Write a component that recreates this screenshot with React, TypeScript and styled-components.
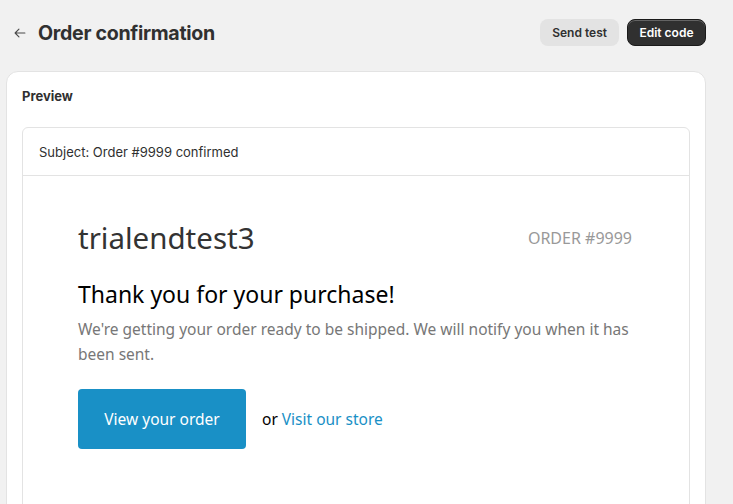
import React from "react";
import styled, { createGlobalStyle } from "styled-components";

const GlobalStyle = createGlobalStyle`
  html, body {
    margin: 0;
    padding: 0;
    background: #f1f1f1;
    font-family: Inter, "Noto Sans", sans-serif;
    color: #303030;
  }
  * {
    box-sizing: border-box;
  }
`;

const EMAIL_FONT = `"Noto Sans", "Open Sans", sans-serif`;

const App = () => {
  return (
    <>
      <GlobalStyle />
      <Page>
        <Header>
          <TitleGroup>
            <BackButton aria-label="Back">
              <svg width="14" height="14" viewBox="0 0 20 20" fill="none">
                <path
                  d="M17 10H3.5M8.5 4.5L3 10l5.5 5.5"
                  stroke="#4a4a4a"
                  strokeWidth="1.6"
                  strokeLinecap="round"
                  strokeLinejoin="round"
                />
              </svg>
            </BackButton>
            <Title>Order confirmation</Title>
          </TitleGroup>
          <Actions>
            <Button>Send test</Button>
            <Button $primary>Edit code</Button>
          </Actions>
        </Header>

        <Card>
          <CardTitle>Preview</CardTitle>
          <PreviewBox>
            <Subject>Subject: Order #9999 confirmed</Subject>
            <Email>
              <EmailInner>
                <ShopRow>
                  <ShopName>trialendtest3</ShopName>
                  <OrderNumber>ORDER #9999</OrderNumber>
                </ShopRow>
                <Heading>Thank you for your purchase!</Heading>
                <Message>
                  We're getting your order ready to be shipped. We will notify
                  you when it has been sent.
                </Message>
                <CtaRow>
                  <CtaButton>View your order</CtaButton>
                  <Or>
                    or <StoreLink>Visit our store</StoreLink>
                  </Or>
                </CtaRow>
              </EmailInner>
            </Email>
          </PreviewBox>
        </Card>
      </Page>
    </>
  );
};

const Page = styled.div`
  width: 733px;
  height: 504px;
  overflow: hidden;
  padding: 0 27px 0 6px;
`;

const Header = styled.div`
  display: flex;
  justify-content: space-between;
  align-items: center;
  height: 71px;
  padding: 0 0 6px 5px;
`;

const TitleGroup = styled.div`
  display: flex;
  align-items: center;
  gap: 9px;
`;

const BackButton = styled.button`
  display: flex;
  align-items: center;
  justify-content: center;
  width: 18px;
  height: 18px;
  padding: 0;
  border: none;
  background: transparent;
  cursor: pointer;
`;

const Title = styled.h1`
  margin: 0;
  font-size: 19.6px;
  font-weight: 700;
  letter-spacing: -0.3px;
  color: #303030;
`;

const Actions = styled.div`
  display: flex;
  gap: 8px;
`;

const Button = styled.button<{ $primary?: boolean }>`
  height: 27px;
  border-radius: 8px;
  font-family: Inter, sans-serif;
  font-size: 12px;
  font-weight: 600;
  cursor: pointer;
  border: ${(p) => (p.$primary ? "1px solid #1a1a1a" : "none")};
  padding: ${(p) => (p.$primary ? "0 11.5px" : "0 12px")};
  background: ${(p) => (p.$primary ? "#303030" : "#e3e3e3")};
  color: ${(p) => (p.$primary ? "#ffffff" : "#303030")};
  box-shadow: ${(p) =>
    p.$primary ? "inset 0 1px 0 rgba(255,255,255,0.25)" : "none"};
`;

const Card = styled.div`
  background: #ffffff;
  border: 1px solid #e3e3e3;
  border-radius: 12px;
  padding: 16px 15px 0 15px;
  height: 460px;
`;

const CardTitle = styled.h2`
  margin: 0 0 23px;
  font-size: 13px;
  font-weight: 650;
  color: #303030;
`;

const PreviewBox = styled.div`
  border: 1px solid #e3e3e3;
  border-radius: 6px;
  height: 420px;
`;

const Subject = styled.div`
  height: 48px;
  display: flex;
  align-items: center;
  padding: 0 16px;
  font-size: 13px;
  color: #303030;
  border-bottom: 1px solid #e3e3e3;
`;

const Email = styled.div`
  padding: 42px 0 0;
  font-family: ${EMAIL_FONT};
`;

const EmailInner = styled.div`
  width: 554px;
  margin-left: 55px;
`;

const ShopRow = styled.div`
  display: flex;
  justify-content: space-between;
  align-items: center;
`;

const ShopName = styled.div`
  font-size: 29.5px;
  color: #333333;
  line-height: 40px;
`;

const OrderNumber = styled.div`
  font-size: 16px;
  color: #999999;
  text-transform: uppercase;
`;

const Heading = styled.h2`
  margin: 20px 0 0;
  font-size: 23px;
  font-weight: 400;
  color: #000000;
  line-height: 32px;
`;

const Message = styled.p`
  margin: 7px 0 0;
  font-size: 15.5px;
  line-height: 25px;
  color: #777777;
`;

const CtaRow = styled.div`
  display: flex;
  align-items: center;
  margin-top: 22px;
`;

const CtaButton = styled.a`
  display: flex;
  align-items: center;
  justify-content: center;
  width: 168px;
  height: 60px;
  background: #1990c6;
  color: #ffffff;
  border-radius: 4px;
  font-size: 15.5px;
  text-decoration: none;
`;

const Or = styled.span`
  margin-left: 16px;
  font-size: 15.5px;
  color: #000000;
`;

const StoreLink = styled.a`
  color: #1990c6;
  text-decoration: none;
`;

export default App;
